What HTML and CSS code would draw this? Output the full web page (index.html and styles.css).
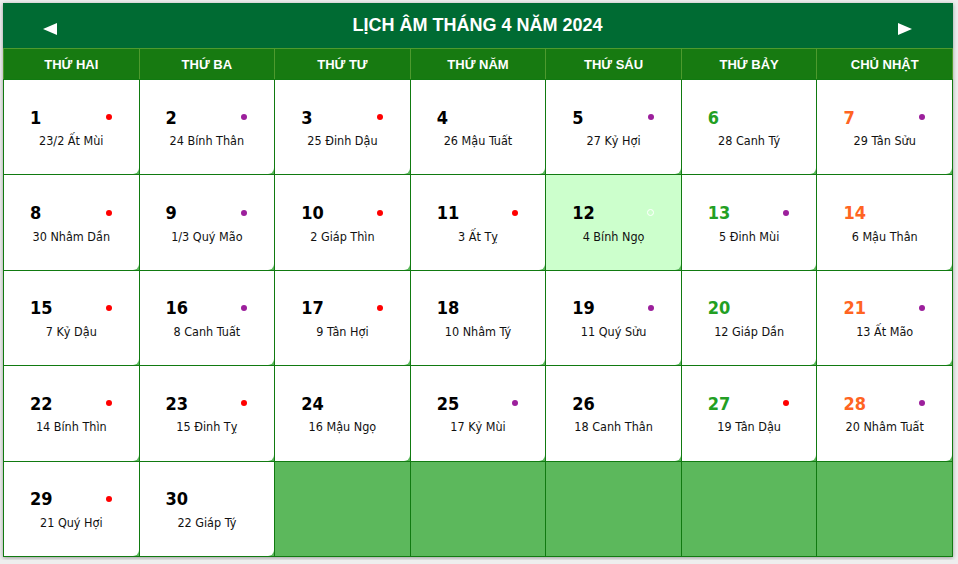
FILE: index.html
```html
<!DOCTYPE html>
<html>

<head>
    <title>Lịch âm tháng 4 năm 2024</title>
    <link rel="stylesheet" href="styles.css">
</head>

<body>

    <div class="calendar">
        <div class="cal-head">
            <span class="arrow prev"></span>
            <span class="cal-title">LỊCH ÂM THÁNG 4 NĂM 2024</span>
            <span class="arrow next"></span>
        </div>
        <div class="weekdays">
            <div>THỨ HAI</div>
            <div>THỨ BA</div>
            <div>THỨ TƯ</div>
            <div>THỨ NĂM</div>
            <div>THỨ SÁU</div>
            <div>THỨ BẢY</div>
            <div>CHỦ NHẬT</div>
        </div>
        <div class="days">
            <div class="cell"><div class="inner"><div class="top"><b>1</b><i class="dot red"></i></div><span>23/2 Ất Mùi</span></div></div>
            <div class="cell"><div class="inner"><div class="top"><b>2</b><i class="dot purple"></i></div><span>24 Bính Thân</span></div></div>
            <div class="cell"><div class="inner"><div class="top"><b>3</b><i class="dot red"></i></div><span>25 Đinh Dậu</span></div></div>
            <div class="cell"><div class="inner"><div class="top"><b>4</b></div><span>26 Mậu Tuất</span></div></div>
            <div class="cell"><div class="inner"><div class="top"><b>5</b><i class="dot purple"></i></div><span>27 Kỷ Hợi</span></div></div>
            <div class="cell"><div class="inner"><div class="top"><b class="sat">6</b></div><span>28 Canh Tý</span></div></div>
            <div class="cell"><div class="inner"><div class="top"><b class="sun">7</b><i class="dot purple"></i></div><span>29 Tân Sửu</span></div></div>

            <div class="cell"><div class="inner"><div class="top"><b>8</b><i class="dot red"></i></div><span>30 Nhâm Dần</span></div></div>
            <div class="cell"><div class="inner"><div class="top"><b>9</b><i class="dot purple"></i></div><span>1/3 Quý Mão</span></div></div>
            <div class="cell"><div class="inner"><div class="top"><b>10</b><i class="dot red"></i></div><span>2 Giáp Thìn</span></div></div>
            <div class="cell"><div class="inner"><div class="top"><b>11</b><i class="dot red"></i></div><span>3 Ất Tỵ</span></div></div>
            <div class="cell"><div class="inner today"><div class="top"><b>12</b><i class="dot ring"></i></div><span>4 Bính Ngọ</span></div></div>
            <div class="cell"><div class="inner"><div class="top"><b class="sat">13</b><i class="dot purple"></i></div><span>5 Đinh Mùi</span></div></div>
            <div class="cell"><div class="inner"><div class="top"><b class="sun">14</b></div><span>6 Mậu Thân</span></div></div>

            <div class="cell"><div class="inner"><div class="top"><b>15</b><i class="dot red"></i></div><span>7 Kỷ Dậu</span></div></div>
            <div class="cell"><div class="inner"><div class="top"><b>16</b><i class="dot purple"></i></div><span>8 Canh Tuất</span></div></div>
            <div class="cell"><div class="inner"><div class="top"><b>17</b><i class="dot red"></i></div><span>9 Tân Hợi</span></div></div>
            <div class="cell"><div class="inner"><div class="top"><b>18</b></div><span>10 Nhâm Tý</span></div></div>
            <div class="cell"><div class="inner"><div class="top"><b>19</b><i class="dot purple"></i></div><span>11 Quý Sửu</span></div></div>
            <div class="cell"><div class="inner"><div class="top"><b class="sat">20</b></div><span>12 Giáp Dần</span></div></div>
            <div class="cell"><div class="inner"><div class="top"><b class="sun">21</b><i class="dot purple"></i></div><span>13 Ất Mão</span></div></div>

            <div class="cell"><div class="inner"><div class="top"><b>22</b><i class="dot red"></i></div><span>14 Bính Thìn</span></div></div>
            <div class="cell"><div class="inner"><div class="top"><b>23</b><i class="dot red"></i></div><span>15 Đinh Tỵ</span></div></div>
            <div class="cell"><div class="inner"><div class="top"><b>24</b></div><span>16 Mậu Ngọ</span></div></div>
            <div class="cell"><div class="inner"><div class="top"><b>25</b><i class="dot purple"></i></div><span>17 Kỷ Mùi</span></div></div>
            <div class="cell"><div class="inner"><div class="top"><b>26</b></div><span>18 Canh Thân</span></div></div>
            <div class="cell"><div class="inner"><div class="top"><b class="sat">27</b><i class="dot red"></i></div><span>19 Tân Dậu</span></div></div>
            <div class="cell"><div class="inner"><div class="top"><b class="sun">28</b><i class="dot purple"></i></div><span>20 Nhâm Tuất</span></div></div>

            <div class="cell"><div class="inner"><div class="top"><b>29</b><i class="dot red"></i></div><span>21 Quý Hợi</span></div></div>
            <div class="cell"><div class="inner"><div class="top"><b>30</b></div><span>22 Giáp Tý</span></div></div>
            <div class="cell"></div>
            <div class="cell"></div>
            <div class="cell"></div>
            <div class="cell"></div>
            <div class="cell"></div>
        </div>
    </div>

</body>

</html>
```

FILE: styles.css
```css
body {
    margin: 0;
    background-color: #eeeeee;
}

.calendar {
    width: 950px;
    margin: 3px;
    box-shadow: 0 1px 4px rgba(0,0,0,0.35);
}

.cal-head {
    height: 45px;
    background-color: #006b33;
    color: white;
    display: flex;
    align-items: center;
    justify-content: space-between;
    padding: 0 41px 0 40px;
}

.cal-title {
    font-family: "Liberation Sans", Arial, sans-serif;
    font-size: 18px;
    font-weight: bold;
}

.arrow {
    width: 0;
    height: 0;
    margin-top: 6px;
    border-top: 6.5px solid transparent;
    border-bottom: 6.5px solid transparent;
}

.prev {
    border-right: 14px solid white;
}

.next {
    border-left: 14px solid white;
}

.weekdays {
    display: grid;
    grid-template-columns: repeat(7, 1fr);
    gap: 1px;
    height: 30px;
    background-color: #4e9a2e;
    border: 1px solid #4e9a2e;
    border-bottom: none;
}

.weekdays div {
    background-color: #177a11;
    color: white;
    font-family: "Liberation Sans", Arial, sans-serif;
    font-size: 13px;
    font-weight: bold;
    display: flex;
    align-items: center;
    justify-content: center;
}

.days {
    display: grid;
    grid-template-columns: repeat(7, 1fr);
    grid-template-rows: repeat(5, 1fr);
    gap: 1px;
    height: 478px;
    box-sizing: border-box;
    background-color: #117a11;
    border: 1px solid #117a11;
}

.cell {
    background-color: #5cb85c;
    display: flex;
}

.inner {
    flex: 1;
    background-color: white;
    border-bottom-right-radius: 6px;
    display: flex;
    flex-direction: column;
    justify-content: center;
    font-family: "DejaVu Sans Condensed", "DejaVu Sans", sans-serif;
}

.today {
    background-color: #ccffcc;
}

.top {
    display: flex;
    align-items: center;
    justify-content: space-between;
    padding: 0 27px 0 26px;
    height: 22px;
}

.top b {
    font-size: 18px;
    color: black;
}

.top .sat {
    color: #239f23;
}

.top .sun {
    color: #ff6422;
}

.dot {
    width: 6px;
    height: 6px;
    border-radius: 50%;
}

.red {
    background-color: #ff0000;
}

.purple {
    background-color: #9c1f9c;
}

.ring {
    box-sizing: border-box;
    width: 7px;
    height: 7px;
    border: 1px solid white;
}

.inner span {
    font-size: 12.5px;
    text-align: center;
    color: #111;
    margin-top: 5px;
}
```
